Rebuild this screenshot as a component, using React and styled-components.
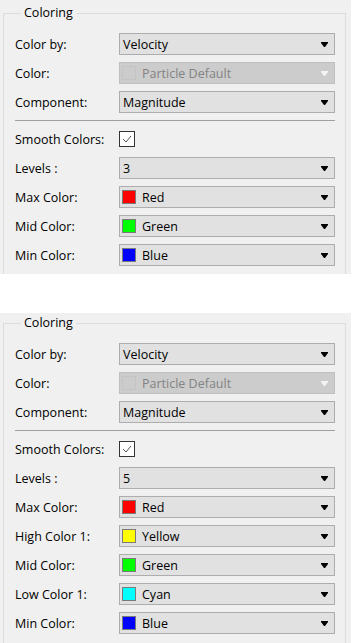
import React from "react";
import styled, { createGlobalStyle } from "styled-components";

const Global = createGlobalStyle`
  html, body { margin: 0; padding: 0; background: #ffffff; }
  body { font-family: "Open Sans", "Liberation Sans", Arial, sans-serif; }
`;

const Page = styled.div`
  display: flex;
  flex-direction: column;
  gap: 39px;
  width: 352px;
`;

const Panel = styled.div`
  width: 351px;
  height: ${(p) => p.$h}px;
  overflow: hidden;
  background: #f0f0f0;
  padding-top: ${(p) => p.$top}px;
  box-sizing: border-box;
`;

const Group = styled.fieldset`
  margin: 0 0 0 3px;
  width: 343px;
  box-sizing: border-box;
  border: 1px solid #dcdcdc;
  padding: 13px 10px 12px 11px;
  min-width: 0;
`;

const Legend = styled.legend`
  margin-left: 6px;
  padding: 0 3px;
  font-size: 12.5px;
  color: #000;
  line-height: 14px;
`;

const Rows = styled.div`
  display: flex;
  flex-direction: column;
  gap: 7px;
`;

const Row = styled.div`
  display: grid;
  grid-template-columns: 104px 1fr;
  align-items: center;
  height: 22px;
`;

const Label = styled.span`
  font-size: 12.5px;
  color: #000;
  white-space: nowrap;
`;

const Combo = styled.div`
  display: flex;
  align-items: center;
  height: 22px;
  box-sizing: border-box;
  border: 1px solid ${(p) => (p.$disabled ? "#bfbfbf" : "#adadad")};
  background: ${(p) => (p.$disabled ? "#cccccc" : "#e1e1e1")};
  padding: 0 6px 0 ${(p) => (p.$swatch ? 1 : 3)}px;
  font-size: 12.5px;
  color: ${(p) => (p.$disabled ? "#838383" : "#000")};
`;

const ComboText = styled.span`
  flex: 1;
  white-space: nowrap;
`;

const Swatch = styled.span`
  width: 14px;
  height: 14px;
  box-sizing: border-box;
  margin: 0 6px 0 1px;
  border: 1px solid ${(p) => (p.$disabled ? "#c4c4c4" : "#7a7a7a")};
  background: ${(p) => p.$color};
`;

const Sep = styled.div`
  height: 1px;
  background: #a0a0a0;
`;

const Check = styled.span`
  display: flex;
  align-items: center;
  justify-content: center;
  width: 16px;
  height: 16px;
  box-sizing: border-box;
  border: 1px solid #333333;
  background: #ffffff;
`;

const Arrow = ({ disabled }) => (
  <svg width="7" height="5" viewBox="0 0 7 5">
    <polygon points="0,0 7,0 7,1 4,5 3,5 0,1" fill={disabled ? "#f4f4f4" : "#000"} />
  </svg>
);

const Dropdown = ({ text, color, disabled }) => (
  <Combo $disabled={disabled} $swatch={color !== undefined}>
    {color !== undefined && <Swatch $color={color} $disabled={disabled} />}
    <ComboText>{text}</ComboText>
    <Arrow disabled={disabled} />
  </Combo>
);

const Field = ({ label, children }) => (
  <Row>
    <Label>{label}</Label>
    {children}
  </Row>
);

const ColoringPanel = ({ h, top, levels, colors }) => (
  <Panel $h={h} $top={top}>
    <Group>
      <Legend>Coloring</Legend>
      <Rows>
        <Field label="Color by:">
          <Dropdown text="Velocity" />
        </Field>
        <Field label="Color:">
          <Dropdown text="Particle Default" color="#cccccc" disabled />
        </Field>
        <Field label="Component:">
          <Dropdown text="Magnitude" />
        </Field>
        <Sep />
        <Field label="Smooth Colors:">
          <div>
            <Check>
              <svg width="10" height="8" viewBox="0 0 10 8">
                <polyline points="1,4 4,7 9,1" fill="none" stroke="#555" strokeWidth="1" />
              </svg>
            </Check>
          </div>
        </Field>
        <Field label="Levels :">
          <Dropdown text={levels} />
        </Field>
        {colors.map((c) => (
          <Field key={c.label} label={c.label}>
            <Dropdown text={c.name} color={c.color} />
          </Field>
        ))}
      </Rows>
    </Group>
  </Panel>
);

export default function App() {
  return (
    <>
      <Global />
      <Page>
        <ColoringPanel
          h={274}
          top={6}
          levels="3"
          colors={[
            { label: "Max Color:", name: "Red", color: "#ff0000" },
            { label: "Mid Color:", name: "Green", color: "#00ff00" },
            { label: "Min Color:", name: "Blue", color: "#0000ff" },
          ]}
        />
        <ColoringPanel
          h={330}
          top={3}
          levels="5"
          colors={[
            { label: "Max Color:", name: "Red", color: "#ff0000" },
            { label: "High Color 1:", name: "Yellow", color: "#ffff00" },
            { label: "Mid Color:", name: "Green", color: "#00ff00" },
            { label: "Low Color 1:", name: "Cyan", color: "#00ffff" },
            { label: "Min Color:", name: "Blue", color: "#0000ff" },
          ]}
        />
      </Page>
    </>
  );
}
